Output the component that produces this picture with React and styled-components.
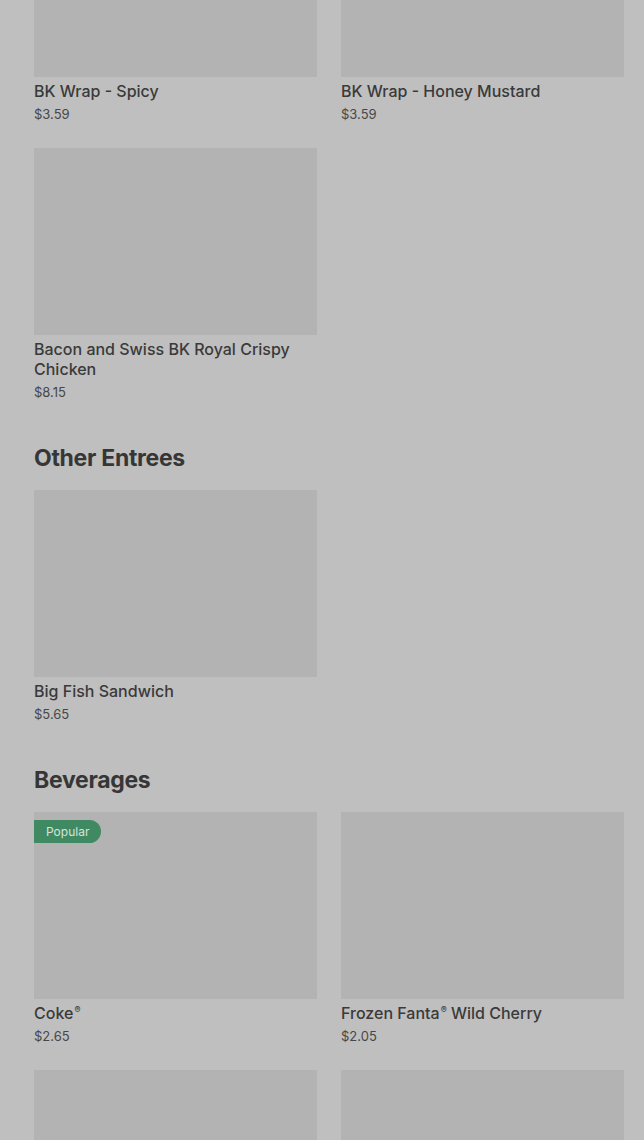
import React from "react";
import styled, { createGlobalStyle } from "styled-components";

const Global = createGlobalStyle`
  html, body {
    margin: 0;
    padding: 0;
    background: #bfbfbf;
    overflow: hidden;
  }
  body {
    font-family: Inter, "Noto Sans", sans-serif;
    color: #3a3a3a;
  }
`;

const sections = [
  {
    title: null,
    items: [
      { name: "BK Wrap - Spicy", price: "$3.59" },
      { name: "BK Wrap - Honey Mustard", price: "$3.59" },
      { name: "Bacon and Swiss BK Royal Crispy Chicken", price: "$8.15" },
    ],
  },
  {
    title: "Other Entrees",
    items: [{ name: "Big Fish Sandwich", price: "$5.65" }],
  },
  {
    title: "Beverages",
    items: [
      { name: "Coke®", price: "$2.65", popular: true },
      { name: "Frozen Fanta® Wild Cherry", price: "$2.05" },
      { name: "", price: "" },
      { name: "", price: "" },
    ],
  },
];

// small raised ® like the reference
const renderName = (name) =>
  name.split("®").map((part, i, arr) => (
    <React.Fragment key={i}>
      {part}
      {i < arr.length - 1 && <Reg>®</Reg>}
    </React.Fragment>
  ));

const App = () => {
  return (
    <Page>
      <Global />
      {sections.map((section, i) => (
        <Section key={i}>
          {section.title && <Heading>{section.title}</Heading>}
          <Grid>
            {section.items.map((item, j) => (
              <Card key={j}>
                <Thumb>{item.popular && <Badge>Popular</Badge>}</Thumb>
                {item.name && <Name>{renderName(item.name)}</Name>}
                {item.price && <Price>{item.price}</Price>}
              </Card>
            ))}
          </Grid>
        </Section>
      ))}
    </Page>
  );
};

const Page = styled.main`
  margin-top: -110px;
  padding: 0 20px 0 34px;
  display: flex;
  flex-direction: column;
  gap: 41px;
`;

const Section = styled.section`
  display: flex;
  flex-direction: column;
  gap: 16px;
`;

const Heading = styled.h2`
  margin: 0;
  font-size: 23px;
  line-height: 32px;
  font-weight: 700;
  letter-spacing: -0.3px;
  color: #363636;
`;

const Grid = styled.div`
  display: grid;
  grid-template-columns: 283px 283px;
  column-gap: 24px;
  row-gap: 25px;
`;

const Card = styled.div`
  display: flex;
  flex-direction: column;
`;

const Thumb = styled.div`
  position: relative;
  height: 187px;
  background: #b3b3b3;
  margin-bottom: 4px;
`;

const Badge = styled.span`
  position: absolute;
  top: 8px;
  left: 0;
  height: 23px;
  padding: 0 12px;
  display: flex;
  align-items: center;
  background: #3f8a63;
  color: #d6e4da;
  font-size: 12px;
  border-radius: 0 12px 12px 0;
`;

const Name = styled.div`
  font-size: 16px;
  line-height: 20px;
  font-weight: 500;
  color: #3a3a3a;
  padding-right: 20px;
`;

const Reg = styled.sup`
  font-size: 9px;
  line-height: 0;
  vertical-align: 6px;
  margin-left: 1px;
`;

const Price = styled.div`
  margin-top: 4px;
  font-size: 13px;
  line-height: 18px;
  color: #474747;
`;

export default App;
